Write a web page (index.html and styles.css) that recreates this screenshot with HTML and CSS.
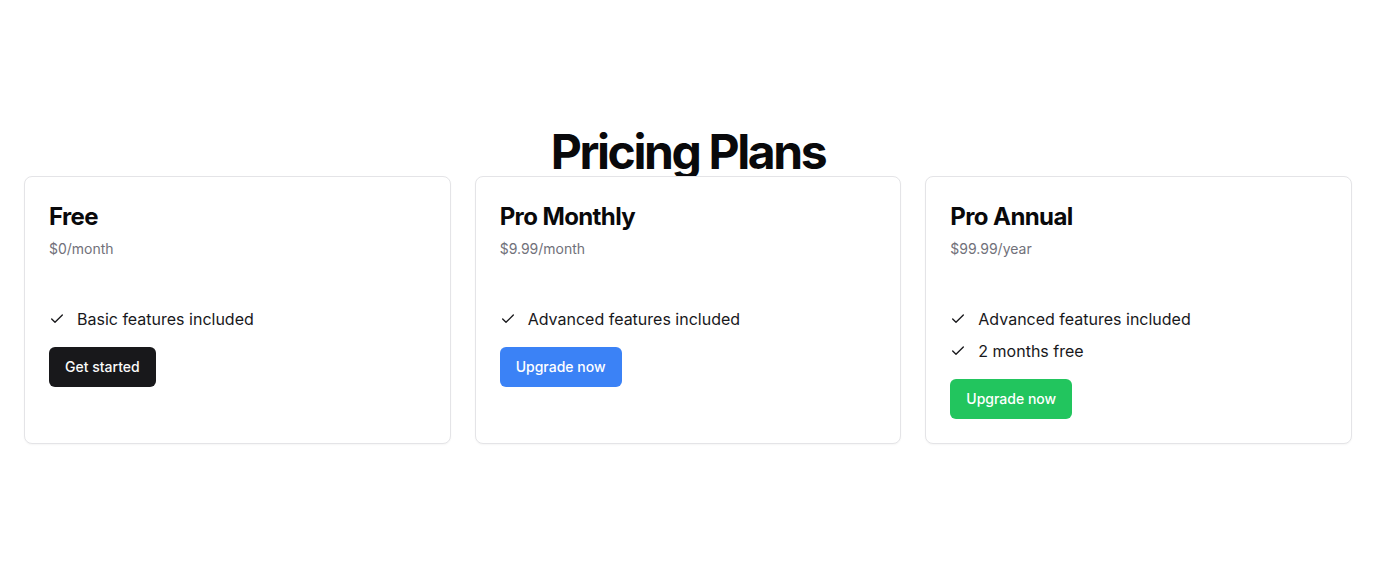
FILE: index.html
```html
<!DOCTYPE html>
<html lang="en">
<head>
<meta charset="utf-8">
<title>Pricing Plans</title>
<link rel="stylesheet" href="styles.css">
</head>
<body>
<main class="page">
  <h1 class="page-title">Pricing Plans</h1>
  <div class="plans">
    <section class="card">
      <h2 class="card-title">Free</h2>
      <p class="card-price">$0/month</p>
      <ul class="features">
        <li class="feature"><svg class="check" viewBox="0 0 24 24" width="16" height="16" fill="none" stroke="currentColor" stroke-width="2" stroke-linecap="round" stroke-linejoin="round"><path d="M20 6 9 17l-5-5"/></svg><span>Basic features included</span></li>
      </ul>
      <div class="actions"><button class="btn btn-dark">Get started</button></div>
    </section>
    <section class="card">
      <h2 class="card-title">Pro Monthly</h2>
      <p class="card-price">$9.99/month</p>
      <ul class="features">
        <li class="feature"><svg class="check" viewBox="0 0 24 24" width="16" height="16" fill="none" stroke="currentColor" stroke-width="2" stroke-linecap="round" stroke-linejoin="round"><path d="M20 6 9 17l-5-5"/></svg><span>Advanced features included</span></li>
      </ul>
      <div class="actions"><button class="btn btn-blue">Upgrade now</button></div>
    </section>
    <section class="card">
      <h2 class="card-title">Pro Annual</h2>
      <p class="card-price">$99.99/year</p>
      <ul class="features">
        <li class="feature"><svg class="check" viewBox="0 0 24 24" width="16" height="16" fill="none" stroke="currentColor" stroke-width="2" stroke-linecap="round" stroke-linejoin="round"><path d="M20 6 9 17l-5-5"/></svg><span>Advanced features included</span></li>
        <li class="feature"><svg class="check" viewBox="0 0 24 24" width="16" height="16" fill="none" stroke="currentColor" stroke-width="2" stroke-linecap="round" stroke-linejoin="round"><path d="M20 6 9 17l-5-5"/></svg><span>2 months free</span></li>
      </ul>
      <div class="actions"><button class="btn btn-green">Upgrade now</button></div>
    </section>
  </div>
</main>
</body>
</html>
```
FILE: styles.css
```css
* { box-sizing: border-box; }
html, body { margin: 0; padding: 0; }
body {
  font-family: Inter, "Noto Sans", sans-serif;
  color: #09090b;
  background: #ffffff;
}
.page {
  min-height: 100vh;
  display: flex;
  flex-direction: column;
  justify-content: center;
  padding: 0 24px;
}
.page-title {
  margin: 0;
  font-size: 48px;
  line-height: 48px;
  font-weight: 700;
  letter-spacing: -0.05em;
  text-align: center;
  color: #09090b;
}
.plans {
  display: grid;
  grid-template-columns: repeat(3, 1fr);
  gap: 24px;
}
.card {
  border: 1px solid #e4e4e7;
  border-radius: 8px;
  background: #fff;
  padding: 24px;
  box-shadow: 0 1px 2px rgba(0,0,0,0.04);
}
.card-title {
  margin: 0;
  font-size: 24px;
  line-height: 32px;
  font-weight: 700;
  letter-spacing: -0.025em;
}
.card-price {
  margin: 6px 0 0;
  font-size: 14px;
  line-height: 20px;
  color: #71717a;
}
.features {
  list-style: none;
  margin: 48px 0 0;
  padding: 0;
  display: flex;
  flex-direction: column;
  gap: 8px;
}
.feature {
  display: flex;
  align-items: center;
  gap: 12px;
  font-size: 16px;
  line-height: 24px;
  color: #18181b;
}
.check { flex: none; }
.actions { margin-top: 16px; }
.btn {
  font-family: inherit;
  font-size: 14px;
  font-weight: 500;
  line-height: 20px;
  height: 40px;
  padding: 0 16px;
  border: none;
  border-radius: 6px;
  color: #fff;
  cursor: pointer;
}
.btn-dark { background: #18181b; color: #fafafa; }
.btn-blue { background: #3b82f6; }
.btn-green { background: #22c55e; }
```
